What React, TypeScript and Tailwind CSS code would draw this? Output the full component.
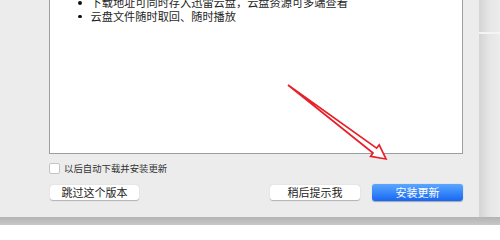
import React from "react";

const font = { fontFamily: '"Noto Sans CJK SC", "Noto Sans", sans-serif' };

function Arrow() {
  return (
    <svg className="absolute left-0 top-0" width="500" height="225" viewBox="0 0 500 225">
      <polygon
        points="288,85 376.6,148.2 379.2,144.8 386,159 370.6,156.4 373.0,153.0"
        fill="#ffffff"
        stroke="#e8202a"
        strokeWidth="1.7"
        strokeLinejoin="miter"
      />
    </svg>
  );
}

export default function App() {
  return (
    <div className="relative w-[500px] h-[225px] overflow-hidden bg-[#eeeeee]" style={font}>
      {/* right background with shadow */}
      <div className="absolute left-[479px] top-0 w-[21px] h-[225px] bg-gradient-to-r from-[#d4d4d4] via-[#e6e6e6] to-[#ececec]" />
      <div className="absolute left-[479px] top-[32px] w-[21px] h-[2px] bg-[#f4f4f4]" />
      {/* bottom shadow */}
      <div className="absolute left-0 top-[217px] w-[500px] h-[8px] bg-gradient-to-b from-[#b4b4b4] to-[#c8c8c8]" />

      {/* window */}
      <div className="relative w-[479px] h-[217px] bg-[#ececec] flex flex-col pl-[49px]">
        <div className="w-[414px] h-[154px] bg-white border-l border-r border-b border-[#9d9d9d] overflow-hidden">
          <ul className="mt-[-4px] text-[11.2px] leading-[13.5px] text-[#1e1e1e]">
            <li className="flex items-center">
              <span className="ml-[28px] mr-[9px] w-[3.5px] h-[3.5px] rounded-full bg-[#111111]" />
              <span>下载地址可同时存入迅雷云盘，云盘资源可多端查看</span>
            </li>
            <li className="flex items-center">
              <span className="ml-[28px] mr-[9px] w-[3.5px] h-[3.5px] rounded-full bg-[#111111]" />
              <span>云盘文件随时取回、随时播放</span>
            </li>
          </ul>
        </div>

        <div className="mt-[8px] flex items-center h-[12px]">
          <div className="w-[11px] h-[11px] bg-white border border-[#c4c4c4] rounded-[2px]" />
          <span className="ml-[4px] text-[9.4px] leading-[12px] text-[#333333]">以后自动下载并安装更新</span>
        </div>

        <div className="mt-[10px] flex items-center h-[17px] w-[414px]">
          <button className="ml-[1px] w-[89px] h-[15px] bg-white rounded-[3px] shadow-[0_0.5px_1px_rgba(0,0,0,0.25)] text-[11px] leading-[15px] text-[#222222] text-center">
            跳过这个版本
          </button>
          <div className="flex-1" />
          <button className="w-[90px] h-[15px] bg-white rounded-[3px] shadow-[0_0.5px_1px_rgba(0,0,0,0.25)] text-[11px] leading-[15px] text-[#222222] text-center">
            稍后提示我
          </button>
          <button className="ml-[12px] w-[91px] h-[17px] rounded-[3px] bg-gradient-to-b from-[#5aa6ff] to-[#1666f3] shadow-[0_0.5px_1px_rgba(0,0,0,0.3)] text-[11px] leading-[17px] text-white text-center">
            安装更新
          </button>
        </div>
      </div>

      <Arrow />
    </div>
  );
}
